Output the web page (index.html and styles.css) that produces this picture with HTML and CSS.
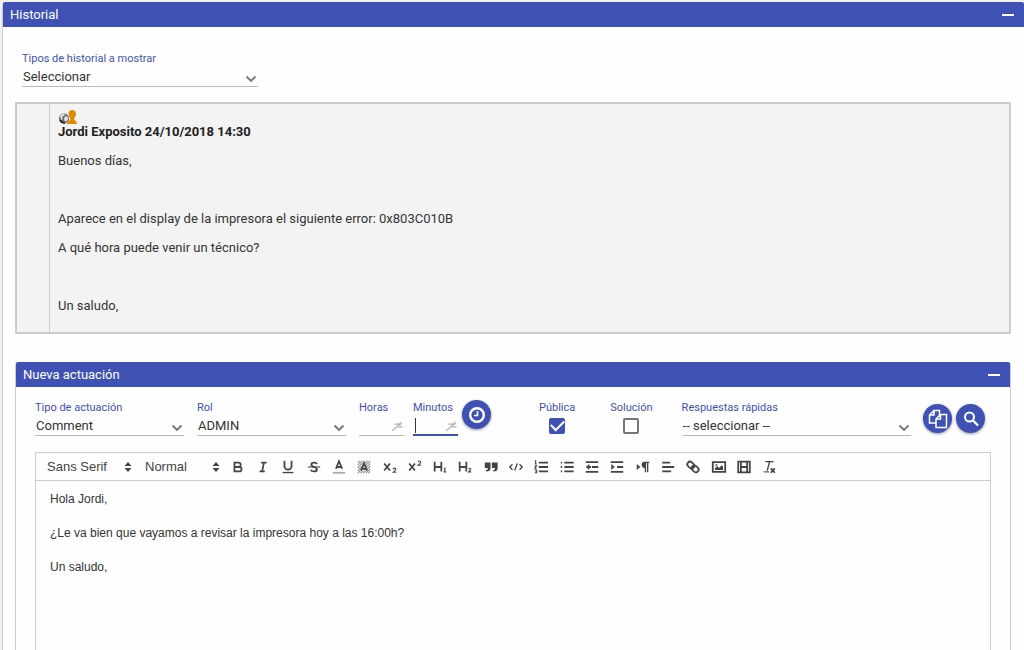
FILE: index.html
```html
<!DOCTYPE html>
<html lang="es">
<head>
<meta charset="utf-8">
<title>Historial</title>
<link rel="stylesheet" href="styles.css">
</head>
<body>
<svg class="sprite" aria-hidden="true">
  <symbol id="chevron" viewBox="0 0 12 8"><path d="M1.500 1.500 6 6l4.500-4.500" fill="none" stroke="#777" stroke-width="1.900"/></symbol>
  <symbol id="updown" viewBox="0 0 8 12"><path d="M.5 5 4 1l3.500 4zM.5 7h7L4 11z" fill="#444"/></symbol>
  <symbol id="wrench" viewBox="0 0 14 12"><path d="M1 11 7 6.500M3.500 4h5l3.500-2M8 4.500 7 7h5.500M8 5l3-1" fill="none" stroke="#b4b4b4" stroke-width="1.300"/></symbol>
</svg>
<main class="panel">
  <header class="panel-head"><h1 class="panel-title">Historial</h1><button class="collapse" aria-label="Contraer historial"></button></header>
  <div class="panel-body">
    <div class="field filter">
      <label for="tipos">Tipos de historial a mostrar</label>
      <div class="select-wrap"><select id="tipos"><option>Seleccionar</option></select><svg class="chev"><use href="#chevron"/></svg></div>
    </div>

    <article class="entry">
      <div class="entry-side"></div>
      <div class="entry-text">
        <svg class="who" viewBox="0 0 20 14" aria-hidden="true">
          <circle cx="6" cy="8.500" r="5" fill="#666"/><path d="M2 6q2-3 5-2l-1 2-2 1 1 2-2 1zM7 6l3 1v3l-3 2-1-3z" fill="#ddd"/><path d="M2 10q1 3 5 3" fill="none" stroke="#222" stroke-width="1.500"/>
          <path d="M9 14q0-3 3.200-4V8Q10.500 6 10.500 4q0-4 3.700-4T18 4q0 2-1.700 4v2q2.700 1 2.700 4z" fill="#e08a00"/>
        </svg>
        <h2 class="author">Jordi Exposito 24/10/2018 14:30</h2>
        <p>Buenos días,</p>
        <p>&nbsp;</p>
        <p>Aparece en el display de la impresora el siguiente error: 0x803C010B</p>
        <p>A qué hora puede venir un técnico?</p>
        <p>&nbsp;</p>
        <p>Un saludo,</p>
      </div>
    </article>

    <section class="panel inner">
      <header class="panel-head"><h2 class="panel-title">Nueva actuación</h2><button class="collapse" aria-label="Contraer nueva actuación"></button></header>
      <div class="action-body">
        <form class="fields">
          <div class="field medium"><label for="tipo">Tipo de actuación</label>
            <div class="select-wrap"><select id="tipo"><option>Comment</option></select><svg class="chev"><use href="#chevron"/></svg></div></div>
          <div class="field medium"><label for="rol">Rol</label>
            <div class="select-wrap"><select id="rol"><option>ADMIN</option></select><svg class="chev"><use href="#chevron"/></svg></div></div>
          <div class="time">
            <div class="field short"><label for="horas">Horas</label>
              <div class="select-wrap"><input class="line" id="horas" type="text"><svg class="wrench"><use href="#wrench"/></svg></div></div>
            <div class="field short"><label for="minutos">Minutos</label>
              <div class="select-wrap active"><input class="line" id="minutos" type="text"><span class="caret"></span><svg class="wrench"><use href="#wrench"/></svg></div></div>
            <button type="button" class="round clock" aria-label="Reloj"><svg viewBox="0 0 18 18"><circle cx="9" cy="9" r="6.800" fill="none" stroke="#fff" stroke-width="2.400"/><path d="M9.500 5v4.500H6" fill="none" stroke="#fff" stroke-width="1.600"/></svg></button>
          </div>
          <div class="check publica"><label for="publica">Pública</label><input id="publica" type="checkbox" checked></div>
          <div class="check solucion"><label for="solucion">Solución</label><input id="solucion" type="checkbox"></div>
          <div class="field wide"><label for="resp">Respuestas rápidas</label>
            <div class="select-wrap"><select id="resp"><option>-- seleccionar --</option></select><svg class="chev"><use href="#chevron"/></svg></div></div>
          <div class="actions">
            <button type="button" class="round" aria-label="Copiar"><svg viewBox="0 0 20 20"><path d="M8 14H1.500V6L6 1.500h5.500V6M6 1.500V6H1.500M8 18.500V10l4.500-4.500h6v13zM12.500 5.500V10H8" fill="none" stroke="#fff" stroke-width="1.500"/></svg></button>
            <button type="button" class="round" aria-label="Buscar"><svg viewBox="0 0 20 20"><circle cx="8.500" cy="8" r="4.500" fill="none" stroke="#fff" stroke-width="2"/><path d="m12 11.500 5 5" stroke="#fff" stroke-width="2.300"/></svg></button>
          </div>
        </form>

        <div class="editor">
          <div class="toolbar">
            <div class="pick font"><select aria-label="Fuente"><option>Sans Serif</option></select><svg><use href="#updown"/></svg></div>
            <div class="pick size"><select aria-label="Tamaño"><option>Normal</option></select><svg><use href="#updown"/></svg></div>
            <div class="tools">
              <button aria-label="Negrita"><svg viewBox="0 0 18 18"><path class="s" d="M5 4h4.500a2.500 2.500 0 0 1 0 5H5zM5 9h5.500a2.500 2.500 0 0 1 0 5H5z"/></svg></button>
              <button aria-label="Cursiva"><svg viewBox="0 0 18 18"><path class="s" d="M7 4h6M5 14h6M8 14l2-10"/></svg></button>
              <button aria-label="Subrayado"><svg viewBox="0 0 18 18"><path class="s" d="M5 2v6a4 4 0 0 0 8 0V2"/><path class="f" d="M3 14.500h12V16H3z"/></svg></button>
              <button aria-label="Tachado"><svg viewBox="0 0 18 18"><path class="t" d="M2 9h14"/><path class="s" d="M12.500 5.500Q11.500 4 9 4 6 4 6 6.300q0 1.700 3 2.700 3.300 1 3.300 2.800Q12.300 14 9 14q-2.700 0-3.800-1.800"/></svg></button>
              <button aria-label="Color de texto"><svg viewBox="0 0 18 18"><path class="soft" d="M2 15.500h14"/><path class="s" d="M5.500 11 9 2.500l3.500 8.500M6.500 9h5"/></svg></button>
              <button aria-label="Color de fondo"><svg viewBox="0 0 18 18"><path class="hatch" d="M2 4l2-2M2 7l5-5M2 10l8-8M2 13 13 2M2 16 16 2M5 16 16 5M8 16l8-8M11 16l5-5M14 16l2-2"/><path d="M4.500 13.500 8 4h2l3.500 9.500z" fill="#ddd"/><path class="s" d="M5.500 13 9 5l3.500 8M6.500 11h5"/></svg></button>
              <button aria-label="Subíndice"><svg viewBox="0 0 18 18"><path class="s" d="m2.500 5 6.500 8M9 5l-6.500 8"/><path class="t" d="M12.500 11.500q0-1.200 1.400-1.200 1.600 0 1.600 1.200 0 1-3 3.500H16"/></svg></button>
              <button aria-label="Superíndice"><svg viewBox="0 0 18 18"><path class="s" d="m2.500 5 6.500 8M9 5l-6.500 8"/><path class="t" d="M12.500 3.500q0-1.200 1.400-1.200 1.600 0 1.600 1.200 0 1-3 3.500H16"/></svg></button>
              <button aria-label="Encabezado 1"><svg viewBox="0 0 18 18"><path class="s" d="M3 3v11M10.500 3v11M3 9h8"/><path class="t" d="m13.500 11 1-.7V14.500m-1.500 0h3"/></svg></button>
              <button aria-label="Encabezado 2"><svg viewBox="0 0 18 18"><path class="s" d="M3 3v11M10.500 3v11M3 9h8"/><path class="t" d="M13 11.500q.2-.8 1.200-.8 1.300 0 1.300.9 0 .7-2.500 2.900h3"/></svg></button>
              <button aria-label="Cita"><svg viewBox="0 0 18 18"><path class="f" d="M2 4h6.500v6q0 4-5 4v-1.500q2 0 2-2.500H2zM10 4h6.500v6q0 4-5 4v-1.500q2 0 2-2.500H10z"/></svg></button>
              <button aria-label="Código"><svg viewBox="0 0 18 18"><path class="m" d="M5 6 2 9l3 3M13 6l3 3-3 3M10.500 5l-3 8"/></svg></button>
              <button aria-label="Lista numerada"><svg viewBox="0 0 18 18"><path class="s" d="M6.500 4H17M6.500 9H17M6.500 14H17"/><path class="t" d="m2 2.500 1-.5v3.500m-1 0h2M2 7.700h2L2 10.500h2M2 12.500h2V14H3h1v1.500H2"/></svg></button>
              <button aria-label="Lista de viñetas"><svg viewBox="0 0 18 18"><path class="s" d="M6 4h10.500M6 9h10.500M6 14h10.500M2 4h1.500M2 9h1.500M2 14h1.500"/></svg></button>
              <button aria-label="Reducir sangría"><svg viewBox="0 0 18 18"><path class="s" d="M2 3.500h14M9 9h7M2 14.500h14"/><path class="f" d="M6 5.500v7L2 9zM5 8h3v2H5z"/></svg></button>
              <button aria-label="Aumentar sangría"><svg viewBox="0 0 18 18"><path class="s" d="M2 3.500h14M9 9h7M2 14.500h14"/><path class="f" d="M2.500 5.500v7L6.500 9z"/></svg></button>
              <button aria-label="Dirección del texto"><svg viewBox="0 0 18 18"><path class="f" d="M2 5.500v7L6 9zM11 10a3.500 3.500 0 0 1 0-7h5v1.500h-1V15h-1.500V4.500h-1V15H11z"/></svg></button>
              <button aria-label="Alineación"><svg viewBox="0 0 18 18"><path class="s" d="M2.500 4h9M2.500 9h13.500M2.500 14h10"/></svg></button>
              <button aria-label="Enlace"><svg viewBox="0 0 18 18"><g transform="rotate(42 9 9)"><rect class="s" x="1.500" y="6" width="8.500" height="6" rx="3"/><rect class="s" x="8" y="6" width="8.500" height="6" rx="3"/></g></svg></button>
              <button aria-label="Imagen"><svg viewBox="0 0 18 18"><path class="s" d="M2 3.500h14v11H2z"/><path class="f" d="M4.500 12.500v-2L7 8l2 2 3-3 1.500 1.500v4zM5 6h2v1.500H5z"/></svg></button>
              <button aria-label="Vídeo"><svg viewBox="0 0 18 18"><path class="s" d="M2.500 3h13v12h-13zM5.500 3v12M12.500 3v12M5.500 9h7"/></svg></button>
              <button aria-label="Quitar formato"><svg viewBox="0 0 18 18"><path class="m" d="M5 3h9M9.700 3 7 13"/><path class="t" d="M3 14.500h6"/><path class="s" d="m11 10.500 4.500 5M15.500 10.500l-4.500 5"/></svg></button>
            </div>
          </div>
          <div class="editor-text" contenteditable="true" role="textbox" aria-label="Mensaje" spellcheck="false">
            <p>Hola Jordi,</p>
            <p>¿Le va bien que vayamos a revisar la impresora hoy a las 16:00h?</p>
            <p>Un saludo,</p>
          </div>
        </div>
      </div>
    </section>
  </div>
</main>
</body>
</html>
```
FILE: styles.css
```css
* { box-sizing: border-box; }
body {
  display: flex;
  flex-direction: column;
  margin: 0;
  padding: 2px 0 0 2px;
  min-height: 100vh;
  background: #f0f0f0;
  color: #333;
  font: 13px/16px Roboto, sans-serif;
}
h1, h2, p { margin: 0; }
button { border: 0; padding: 0; background: none; }
.sprite { display: none; }

/* Panels stretch to the bottom of the window */
.panel, .panel-body, .action-body, .editor { display: flex; flex-direction: column; }
.panel, .panel-body, .action-body, .editor { flex: 1 0 auto; }
.panel {
  background: #fefefe;
  border: 1px solid #ccc;
  border-width: 0 1px;
  border-radius: 3px 3px 0 0;
}
body > .panel { border-right: 0; }
.panel-head {
  display: flex;
  align-items: center;
  justify-content: space-between;
  height: 25px;
  padding: 0 10px 0 7px;
  background: #3f51b5;
  color: #fff;
  border-radius: 2px 2px 0 0;
}
.panel-title { font-size: 13px; font-weight: 400; }
.collapse { width: 12px; height: 2px; background: #fff; }
.panel-body { padding: 23px 13px 0 12px; }

label { display: block; font-size: 11px; line-height: 18px; color: #3f51b5; white-space: nowrap; }
.filter { width: 236px; margin: 0 0 15px 7px; }
.select-wrap { position: relative; height: 19px; border-bottom: 1px solid #bbb; }
.select-wrap select, .line {
  display: block;
  width: 100%;
  height: 18px;
  margin: 0;
  padding: 0 16px 0 1px;
  border: 0;
  outline: 0;
  appearance: none;
  background: transparent;
  color: #333;
  font: 13px/18px Roboto, sans-serif;
}
.chev { position: absolute; right: 1px; top: 7px; width: 12px; height: 8px; pointer-events: none; }
.wrench { position: absolute; right: 0; top: 3px; width: 13px; height: 12px; }
.active { border-bottom: 2px solid #3f51b5; }
.caret { position: absolute; left: 2px; top: 1px; width: 1px; height: 15px; background: #333; }

.entry { display: flex; border: 2px solid #ccc; background: #f3f3f3; }
.entry-side { width: 33px; border-right: 1px solid #ccc; }
.entry-text { flex: 1; padding: 6px 8px 18px; }
.entry-text p { margin-top: 13px; }
.who { display: block; width: 20px; height: 14px; }
.author { font-size: 13px; font-weight: 700; line-height: 16px; color: #222; }

.inner { margin-top: 28px; }
.action-body { padding: 12px 19px 0; }
.fields { display: flex; align-items: flex-start; margin: 0 6px 0 0; }
.medium { width: 149px; margin-right: 13px; }
.time { display: flex; }
.short { width: 45px; margin-right: 9px; }
.short:nth-child(2) { margin-right: 4px; }
.wide { flex: 1; min-width: 120px; margin-right: 12px; }
.check { display: flex; flex-direction: column; align-items: center; }
.publica { margin: 0 35px 0 48px; }
.solucion { margin-right: 29px; }
.check input {
  display: grid;
  place-items: center;
  width: 16px;
  height: 16px;
  margin: 1px 0 0;
  border: 2px solid #777;
  border-radius: 2px;
  appearance: none;
  background: #fff;
}
.check input:checked { background: #3f51b5; border-color: #3f51b5; }
.check input:checked::after {
  content: "";
  width: 11px;
  height: 6px;
  border: solid #fff;
  border-width: 0 0 2px 2px;
  transform: translateY(-2px) rotate(-45deg);
}
.actions { display: flex; gap: 4px; padding-top: 5px; }
.round {
  display: grid;
  place-items: center;
  flex: none;
  width: 29px;
  height: 29px;
  border-radius: 50%;
  background: #3f51b5;
  box-shadow: 0 1px 3px #0006;
}
.round svg { width: 20px; height: 20px; }
.clock { margin-top: 1px; }
.clock svg { width: 18px; height: 18px; }

.editor { margin-top: 16px; border: 1px solid #ccc; border-bottom: 0; }
.toolbar {
  display: flex;
  align-items: center;
  height: 28px;
  padding-left: 11px;
  border-bottom: 1px solid #ccc;
}
.pick { position: relative; flex: none; }
.pick select {
  display: block;
  width: 100%;
  padding: 0;
  border: 0;
  appearance: none;
  background: transparent;
  color: #444;
  font: 13px/20px "Liberation Sans", Arial, sans-serif;
}
.pick svg { position: absolute; right: 0; top: 4px; width: 8px; height: 12px; pointer-events: none; }
.font { width: 85px; margin-right: 13px; }
.size { width: 75px; margin-right: 5px; }
.tools { display: flex; flex: 0 1 557px; }
.tools button { flex: 1; display: grid; place-items: center; height: 22px; }
.tools svg { width: 16px; height: 16px; }
.s, .m, .t, .soft, .hatch { fill: none; stroke: #444; }
.s { stroke-width: 2; }
.m { stroke-width: 1.5; }
.t { stroke-width: 1.2; }
.soft { stroke: #aaa; stroke-width: 2; }
.hatch { stroke: #888; stroke-width: 1.2; }
.f { fill: #444; }
.editor-text { padding: 10px 14px; outline: 0; font: 12px/17px "Liberation Sans", Arial, sans-serif; }
.editor-text p { margin-bottom: 17px; }
```
